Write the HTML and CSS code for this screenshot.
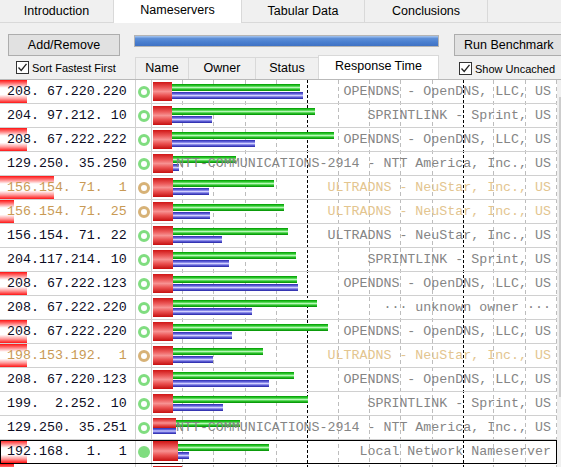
FILE: index.html
```html
<!DOCTYPE html>
<html>

<head>
	<meta charset="utf-8">
	<title>DNS Benchmark</title>
	<link rel="stylesheet" href="styles.css">
</head>

<body>

	<div class="tabs">
		<div class="tab tabIntro">Introduction</div>
		<div class="tab tabNames tabActive">Nameservers</div>
		<div class="tab tabData">Tabular Data</div>
		<div class="tab tabEnd">Conclusions</div>
	</div>

	<div class="toolbar">
		<button class="button addButton">Add/Remove</button>
		<div class="progress"><div class="progressFill"></div></div>
		<button class="button runButton">Run Benchmark</button>
	</div>

	<div class="colHead">
		<div class="check sortCheck">
			<span class="box"><svg width="11" height="11" viewBox="0 0 11 11"><polyline points="1.5,5.5 4.2,8.5 9.5,1.8" fill="none" stroke="#222" stroke-width="1.3"/></svg></span>
			Sort Fastest First
		</div>
		<div class="headCell nameHead">Name</div>
		<div class="headCell ownerHead">Owner</div>
		<div class="headCell statusHead">Status</div>
		<div class="headCell timeHead">Response Time</div>
		<div class="check cachedCheck">
			<span class="box"><svg width="11" height="11" viewBox="0 0 11 11"><polyline points="1.5,5.5 4.2,8.5 9.5,1.8" fill="none" stroke="#222" stroke-width="1.3"/></svg></span>
			Show Uncached
		</div>
	</div>

	<div class="list">
		<div class="rows">
			<svg class="grid" width="405" height="388">
				<g stroke="#bdbdbd" stroke-dasharray="4 3">
					<line x1="30.5" y1="0" x2="30.5" y2="388"/>
					<line x1="61.5" y1="0" x2="61.5" y2="388"/>
					<line x1="93.5" y1="0" x2="93.5" y2="388"/>
					<line x1="124.5" y1="0" x2="124.5" y2="388"/>
					<line x1="186.5" y1="0" x2="186.5" y2="388"/>
					<line x1="217.5" y1="0" x2="217.5" y2="388"/>
					<line x1="248.5" y1="0" x2="248.5" y2="388"/>
					<line x1="280.5" y1="0" x2="280.5" y2="388"/>
					<line x1="341.5" y1="0" x2="341.5" y2="388"/>
					<line x1="373.5" y1="0" x2="373.5" y2="388"/>
					<line x1="404.5" y1="0" x2="404.5" y2="388"/>
				</g>
				<g stroke="#000" stroke-dasharray="3 2">
					<line x1="155.5" y1="0" x2="155.5" y2="388"/>
					<line x1="311.5" y1="0" x2="311.5" y2="388"/>
				</g>
			</svg>

			<div class="row">
				<div class="ipCell" style="--bar:27px">208. 67.220.220</div>
				<div class="statusCell"><div class="ring"></div></div>
				<div class="chartCell">
					<span class="green" style="width:147px"></span>
					<span class="blue" style="width:150px"></span>
					<span class="red" style="width:19px"></span>
					<span class="owner">OPENDNS - OpenDNS, LLC, US</span>
				</div>
			</div>

			<div class="row">
				<div class="ipCell">204. 97.212. 10</div>
				<div class="statusCell"><div class="ring"></div></div>
				<div class="chartCell">
					<span class="green" style="width:162px"></span>
					<span class="blue" style="width:59px"></span>
					<span class="red" style="width:19px"></span>
					<span class="owner">SPRINTLINK - Sprint, US</span>
				</div>
			</div>

			<div class="row">
				<div class="ipCell" style="--bar:27px">208. 67.222.222</div>
				<div class="statusCell"><div class="ring"></div></div>
				<div class="chartCell">
					<span class="green" style="width:181px"></span>
					<span class="blue" style="width:102px"></span>
					<span class="red" style="width:19px"></span>
					<span class="owner">OPENDNS - OpenDNS, LLC, US</span>
				</div>
			</div>

			<div class="row">
				<div class="ipCell">129.250. 35.250</div>
				<div class="statusCell"><div class="ring"></div></div>
				<div class="chartCell">
					<span class="green" style="width:83px"></span>
					<span class="blue" style="width:26px"></span>
					<span class="red" style="width:20px"></span>
					<span class="owner">NTT-COMMUNICATIONS-2914 - NTT America, Inc., US</span>
				</div>
			</div>

			<div class="row warn">
				<div class="ipCell" style="--bar:54px">156.154. 71.  1</div>
				<div class="statusCell"><div class="ring"></div></div>
				<div class="chartCell">
					<span class="green" style="width:121px"></span>
					<span class="blue" style="width:56px"></span>
					<span class="red" style="width:20px"></span>
					<span class="owner">ULTRADNS - NeuStar, Inc., US</span>
				</div>
			</div>

			<div class="row warn">
				<div class="ipCell" style="--bar:14px">156.154. 71. 25</div>
				<div class="statusCell"><div class="ring"></div></div>
				<div class="chartCell">
					<span class="green" style="width:131px"></span>
					<span class="blue" style="width:57px"></span>
					<span class="red" style="width:20px"></span>
					<span class="owner">ULTRADNS - NeuStar, Inc., US</span>
				</div>
			</div>

			<div class="row">
				<div class="ipCell">156.154. 71. 22</div>
				<div class="statusCell"><div class="ring"></div></div>
				<div class="chartCell">
					<span class="green" style="width:135px"></span>
					<span class="blue" style="width:69px"></span>
					<span class="red" style="width:20px"></span>
					<span class="owner">ULTRADNS - NeuStar, Inc., US</span>
				</div>
			</div>

			<div class="row">
				<div class="ipCell">204.117.214. 10</div>
				<div class="statusCell"><div class="ring"></div></div>
				<div class="chartCell">
					<span class="green" style="width:143px"></span>
					<span class="blue" style="width:76px"></span>
					<span class="red" style="width:20px"></span>
					<span class="owner">SPRINTLINK - Sprint, US</span>
				</div>
			</div>

			<div class="row">
				<div class="ipCell" style="--bar:27px">208. 67.222.123</div>
				<div class="statusCell"><div class="ring"></div></div>
				<div class="chartCell">
					<span class="green" style="width:144px"></span>
					<span class="blue" style="width:145px"></span>
					<span class="red" style="width:20px"></span>
					<span class="owner">OPENDNS - OpenDNS, LLC, US</span>
				</div>
			</div>

			<div class="row">
				<div class="ipCell">208. 67.222.220</div>
				<div class="statusCell"><div class="ring"></div></div>
				<div class="chartCell">
					<span class="green" style="width:164px"></span>
					<span class="blue" style="width:99px"></span>
					<span class="red" style="width:20px"></span>
					<span class="owner unknown">··· unknown owner ···</span>
				</div>
			</div>

			<div class="row">
				<div class="ipCell" style="--bar:27px">208. 67.222.220</div>
				<div class="statusCell"><div class="ring"></div></div>
				<div class="chartCell">
					<span class="green" style="width:175px"></span>
					<span class="blue" style="width:79px"></span>
					<span class="red" style="width:20px"></span>
					<span class="owner">OPENDNS - OpenDNS, LLC, US</span>
				</div>
			</div>

			<div class="row warn">
				<div class="ipCell" style="--bar:27px">198.153.192.  1</div>
				<div class="statusCell"><div class="ring"></div></div>
				<div class="chartCell">
					<span class="green" style="width:110px"></span>
					<span class="blue" style="width:60px"></span>
					<span class="red" style="width:20px"></span>
					<span class="owner">ULTRADNS - NeuStar, Inc., US</span>
				</div>
			</div>

			<div class="row">
				<div class="ipCell">208. 67.220.123</div>
				<div class="statusCell"><div class="ring"></div></div>
				<div class="chartCell">
					<span class="green" style="width:141px"></span>
					<span class="blue" style="width:116px"></span>
					<span class="red" style="width:20px"></span>
					<span class="owner">OPENDNS - OpenDNS, LLC, US</span>
				</div>
			</div>

			<div class="row">
				<div class="ipCell">199.  2.252. 10</div>
				<div class="statusCell"><div class="ring"></div></div>
				<div class="chartCell">
					<span class="green" style="width:155px"></span>
					<span class="blue" style="width:70px"></span>
					<span class="red" style="width:20px"></span>
					<span class="owner">SPRINTLINK - Sprint, US</span>
				</div>
			</div>

			<div class="row">
				<div class="ipCell">129.250. 35.251</div>
				<div class="statusCell"><div class="ring"></div></div>
				<div class="chartCell">
					<span class="green" style="left:24px;width:64px"></span>
					<span class="blue" style="width:23px;top:12px;height:6px"></span>
					<span class="red" style="width:23px;height:10px"></span>
					<span class="owner">NTT-COMMUNICATIONS-2914 - NTT America, Inc., US</span>
				</div>
			</div>

			<div class="row local">
				<div class="ipCell" style="--bar:27px">192.168.  1.  1</div>
				<div class="statusCell"><div class="ring"></div></div>
				<div class="chartCell">
					<span class="green" style="width:116px"></span>
					<span class="blue" style="width:36px"></span>
					<span class="red" style="width:25px;top:1px;height:20px"></span>
					<span class="owner">Local Network Nameserver</span>
				</div>
			</div>

			<!-- next row, only its top edge shows -->
			<div class="row">
				<div class="ipCell" style="--bar:14px"></div>
				<div class="statusCell"></div>
				<div class="chartCell">
					<span class="red" style="width:29px"></span>
				</div>
			</div>
		</div>

		<div class="scrollbar"><div class="thumb"></div></div>
	</div>

</body>

</html>
```

FILE: styles.css
```css
body {
	margin: 0;
	width: 561px;
	height: 467px;
	overflow: hidden;
	background-color: #f0f0f0;
	font: 12.5px "Liberation Sans", Arial, sans-serif;
	color: #000;
}

/* tab strip */

.tabs {
	display: flex;
	align-items: flex-start;
	height: 22px;
	border-bottom: 1px solid #d9d9d9;
}

.tab {
	box-sizing: border-box;
	flex-shrink: 0;
	height: 22px;
	line-height: 22px;
	text-align: center;
	background-color: #f0f0f0;
	border-right: 1px solid #d9d9d9;
}

.tabIntro { width: 114px; }
.tabNames { width: 128px; }
.tabData { width: 123px; }
.tabEnd { width: 123px; }

.tabActive {
	height: 23px;
	line-height: 20px;
	background-color: #fff;
}

/* buttons and progress */

.toolbar {
	display: flex;
	align-items: flex-start;
	height: 22px;
	padding: 11px 0 0 8px;
}

.button {
	box-sizing: border-box;
	flex-shrink: 0;
	height: 22px;
	padding: 0;
	border: 1px solid #adadad;
	background-color: #e1e1e1;
	font: 12.5px "Liberation Sans", Arial, sans-serif;
	color: #000;
	white-space: nowrap;
}

.addButton { width: 112px; }

.runButton {
	width: 120px;
	margin-left: 15px;
	text-align: left;
	padding-left: 9px;
}

.progress {
	box-sizing: border-box;
	flex-shrink: 0;
	width: 305px;
	height: 12px;
	margin-left: 14px;
	margin-top: 1px;
	border: 1px solid #b4b4b4;
	background-color: #e6e6e6;
}

.progressFill {
	height: 100%;
	background: linear-gradient(#a8c6ee, #5d8fd8 25%, #4a7fcf 60%, #3f72c4);
}

/* column header */

.colHead {
	display: flex;
	align-items: flex-start;
	height: 23px;
	white-space: nowrap;
}

.check {
	display: flex;
	align-items: center;
	flex-shrink: 0;
	height: 23px;
	font-size: 11px;
}

.sortCheck {
	box-sizing: border-box;
	width: 135px;
	padding-left: 16px;
}

.cachedCheck {
	box-sizing: border-box;
	margin-left: 20px;
	padding-top: 2px;
}

.box {
	box-sizing: border-box;
	display: flex;
	align-items: center;
	justify-content: center;
	width: 13px;
	height: 13px;
	margin-right: 3px;
	border: 1px solid #333;
	background-color: #fff;
}

.headCell {
	box-sizing: border-box;
	flex-shrink: 0;
	height: 22px;
	margin-top: 1px;
	line-height: 21px;
	text-align: center;
	border-left: 1px solid #d9d9d9;
	border-top: 1px solid #d9d9d9;
}

.nameHead { width: 53px; }
.ownerHead { width: 67px; }
.statusHead { width: 63px; }

.timeHead {
	width: 121px;
	height: 24px;
	margin-top: -1px;
	line-height: 21px;
	background-color: #fff;
	border-right: 1px solid #d9d9d9;
	position: relative;
	z-index: 2;
}

/* nameserver list */

.list {
	display: flex;
	height: 388px;
	border-top: 1px solid #b9b9b9;
}

.rows {
	position: relative;
	flex-shrink: 0;
	width: 557px;
	background-color: #fff;
}

.grid {
	position: absolute;
	left: 152px;
	top: 0;
}

.row {
	position: relative;
	display: flex;
	height: 23px;
	border-bottom: 1px solid #d0d0d0;
}

.ipCell {
	--bar: 0px;
	box-sizing: border-box;
	width: 136px;
	padding-left: 7px;
	border-right: 1px solid #d0d0d0;
	font: 13.3px "Liberation Mono", "Courier New", monospace;
	line-height: 23px;
	white-space: pre;
	color: #0c0c24;
	background: linear-gradient(#ff1212, #ff7070 14%, #fff 34%, #fff 64%, #ff9a9a 82%, #ff1414) no-repeat 0 0 / var(--bar) 100%;
}

.statusCell {
	box-sizing: border-box;
	width: 16px;
	border-right: 1px solid #d0d0d0;
}

.ring {
	box-sizing: border-box;
	width: 12px;
	height: 12px;
	margin: 5.5px auto 0;
	border: 3px solid #80dd80;
	border-radius: 50%;
}

.chartCell {
	position: relative;
	width: 405px;
}

.red, .green, .blue {
	position: absolute;
	left: 1px;
}

.red {
	top: 2px;
	height: 19px;
	background: linear-gradient(#cf1515, #ec5a5a 30%, #f79292 50%, #ea5050 72%, #c50f0f);
}

.green {
	top: 4px;
	height: 7px;
	background: linear-gradient(#009a00, #35d035 30%, #b8f8b8 50%, #2ec82e 72%, #008c00);
}

.blue {
	top: 12px;
	height: 7px;
	background: linear-gradient(#2c2cb0, #6a6ae0 30%, #d0d0ff 50%, #6666dc 72%, #2424a4);
}

.owner {
	position: absolute;
	right: 6px;
	top: 0;
	font: 13.3px "Liberation Mono", "Courier New", monospace;
	line-height: 23px;
	white-space: pre;
	color: #858585;
}

.warn .ipCell { color: #c99a55; }
.warn .ring { border-color: #d7b277; }
.warn .owner { color: #e3c58f; }

.local {
	outline: 1px solid #000;
	outline-offset: -1px;
}

.local .ring {
	background-color: #80dd80;
	border-width: 0;
}

.scrollbar {
	width: 17px;
	flex-shrink: 0;
	background-color: #f0f0f0;
}

.thumb {
	height: 300px;
	margin: 17px 2px 0 2px;
	background-color: #cdcdcd;
}
```
